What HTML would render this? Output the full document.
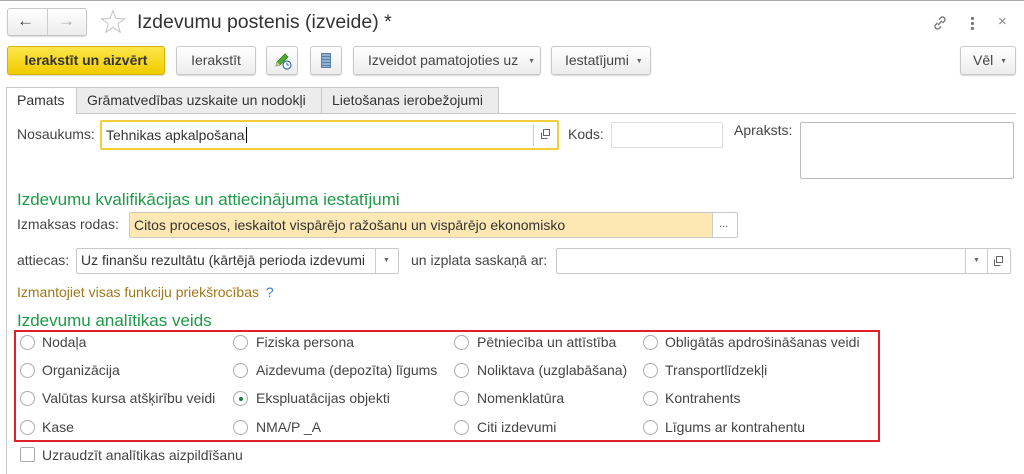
<!DOCTYPE html>
<html><head><meta charset="utf-8"><style>
*{box-sizing:border-box;margin:0;padding:0}
body{width:1024px;height:474px;overflow:hidden;background:#fff;font-family:"Liberation Sans",Arial,sans-serif;font-size:14px;color:#444;position:relative}
.a{position:absolute}
.t{position:absolute;white-space:nowrap;line-height:16px}
.btn{position:absolute;height:29px;border:1px solid #c8c8c8;border-radius:3px;background:linear-gradient(#fff,#ececec);box-shadow:0 1px 1px rgba(0,0,0,.15);line-height:27px;text-align:center;color:#444;font-size:14px;white-space:nowrap}
.inp{position:absolute;border:1px solid #c8c8c8;border-radius:2px;background:#fff}
.radio{position:absolute;width:15px;height:15px;border:1px solid #aaa;border-radius:50%;background:#fff}
.dd{font-size:7px;color:#666;vertical-align:middle}
.green{color:#1d9a46;font-size:17px}
.tab{position:absolute;top:87px;height:27px;border:1px solid #c8c8c8;background:#ececec;line-height:25px;padding:0 10px;color:#333;font-size:14px}
</style></head><body>
<div class="a" style="left:0;top:0;width:1024px;height:1px;background:#aaa"></div>
<div class="btn" style="left:7px;top:8px;width:80px;height:28px"></div>
<div class="a" style="left:47px;top:9px;width:1px;height:26px;background:#ccc"></div>
<div class="t" style="left:17px;top:13px;font-size:17px;color:#444;font-weight:bold">&#8592;</div>
<div class="t" style="left:58px;top:13px;font-size:17px;color:#aaa;font-weight:bold">&#8594;</div>
<svg class="a" style="left:100px;top:9px" width="26" height="25" viewBox="0 0 26 25"><polygon points="13,1.5 16,9.5 24.5,9.7 17.8,15 20.2,23.3 13,18.4 5.8,23.3 8.2,15 1.5,9.7 10,9.5" fill="none" stroke="#c4c4c4" stroke-width="1"/></svg>
<div class="t" style="left:137px;top:11px;font-size:19.5px;line-height:22px;color:#333">Izdevumu postenis (izveide) *</div>
<svg class="a" style="left:931px;top:14px" width="18" height="18" viewBox="0 0 18 18" fill="none" stroke="#777" stroke-width="1.4"><path d="M8 5.5l2-2a2.5 2.5 0 013.5 3.5l-2 2M10 12.5l-2 2a2.5 2.5 0 01-3.5-3.5l2-2M7 11l4-4"/></svg>
<div class="a" style="left:971px;top:17px;width:3px;height:3px;background:#777;border-radius:1px"></div>
<div class="a" style="left:971px;top:22px;width:3px;height:3px;background:#777;border-radius:1px"></div>
<div class="a" style="left:971px;top:27px;width:3px;height:3px;background:#777;border-radius:1px"></div>
<div class="t" style="left:998px;top:14px;font-size:15px;color:#888">&#215;</div>
<div class="btn" style="left:7px;top:46px;width:158px;background:linear-gradient(#fbe64a,#f2cc00);border-color:#d4b200;color:#333;font-weight:bold">Ierakstīt un aizvērt</div>
<div class="btn" style="left:176px;top:46px;width:80px">Ierakstīt</div>
<div class="btn" style="left:266px;top:46px;width:32px"></div>
<svg class="a" style="left:273px;top:51px" width="20" height="20" viewBox="0 0 20 20"><path d="M3 15l1-4 8-8 3 3-8 8z" fill="#4cae2e" stroke="#2d7a1a" stroke-width=".8"/><path d="M3 15l1-4 3 3z" fill="#e8c890"/><circle cx="14" cy="14" r="4" fill="#fff" stroke="#3a6fa8" stroke-width="1.2"/><path d="M14 11.5V14h2" stroke="#3a6fa8" fill="none"/></svg>
<div class="btn" style="left:310px;top:46px;width:32px"></div>
<div class="a" style="left:321px;top:53px;width:10px;height:15px;border:1px solid #5a7fa8;background:repeating-linear-gradient(#8fb0d4 0 2px,#5a7fa8 2px 3px)"></div>
<div class="btn" style="left:353px;top:46px;width:188px;text-align:left;padding-left:14px">Izveidot pamatojoties uz <span class="dd" style="margin-left:6px">&#9660;</span></div>
<div class="btn" style="left:551px;top:46px;width:100px;text-align:left;padding-left:13px">Iestatījumi <span class="dd" style="margin-left:3px">&#9660;</span></div>
<div class="btn" style="left:960px;top:46px;width:56px;text-align:left;padding-left:12px">Vēl <span class="dd" style="margin-left:3px">&#9660;</span></div>
<div class="a" style="left:76px;top:113px;width:940px;height:1px;background:#c8c8c8"></div>
<div class="a" style="left:6px;top:113px;width:1px;height:361px;background:#c8c8c8"></div>
<div class="tab" style="left:6px;width:71px;background:#fff;border-bottom-color:#fff">Pamats</div>
<div class="tab" style="left:76px;width:246px">Grāmatvedības uzskaite un nodokļi</div>
<div class="tab" style="left:321px;width:178px">Lietošanas ierobežojumi</div>
<div class="t" style="left:17px;top:126px">Nosaukums:</div>
<div class="inp" style="left:100px;top:120px;width:459px;height:30px;border:2px solid #f2cf3a"></div>
<div class="t" style="left:106px;top:127px;color:#333">Tehnikas apkalpošana<span style="border-left:1px solid #000;margin-left:1px"></span></div>
<div class="a" style="left:533px;top:124px;width:1px;height:22px;background:#ccc"></div>
<svg class="a" style="left:539px;top:128px" width="12" height="12" viewBox="0 0 12 12" fill="none" stroke="#666"><rect x="4.5" y="1.5" width="6" height="6"/><path d="M2.5 4.5v6h6"/></svg>
<div class="t" style="left:568px;top:126px">Kods:</div>
<div class="inp" style="left:611px;top:122px;width:112px;height:26px;border-color:#ddd"></div>
<div class="t" style="left:734px;top:122px">Apraksts:</div>
<div class="inp" style="left:800px;top:122px;width:214px;height:57px;border-color:#bbb"></div>
<div class="t green" style="left:17px;top:190px;line-height:20px">Izdevumu kvalifikācijas un attiecinājuma iestatījumi</div>
<div class="t" style="left:17px;top:216px">Izmaksas rodas:</div>
<div class="inp" style="left:129px;top:212px;width:609px;height:26px"></div>
<div class="a" style="left:130px;top:213px;width:583px;height:24px;background:#fde8b4;border-right:1px solid #ccc"></div>
<div class="t" style="left:134px;top:217px;color:#333">Citos procesos, ieskaitot vispārējo ražošanu un vispārējo ekonomisko</div>
<div class="t" style="left:719px;top:216px;font-size:11px;color:#555">...</div>
<div class="t" style="left:17px;top:252px">attiecas:</div>
<div class="inp" style="left:76px;top:248px;width:323px;height:26px"></div>
<div class="a" style="left:77px;top:249px;width:298px;height:24px;overflow:hidden"><div class="t" style="left:4px;top:3px;color:#333">Uz finanšu rezultātu (kārtējā perioda izdevumi</div></div>
<div class="a" style="left:375px;top:249px;width:1px;height:24px;background:#ccc"></div>
<div class="t dd" style="left:383px;top:253px">&#9660;</div>
<div class="t" style="left:411px;top:252px">un izplata saskaņā ar:</div>
<div class="inp" style="left:556px;top:248px;width:455px;height:26px"></div>
<div class="a" style="left:965px;top:249px;width:1px;height:24px;background:#ccc"></div>
<div class="a" style="left:987px;top:249px;width:1px;height:24px;background:#ccc"></div>
<div class="t dd" style="left:973px;top:253px">&#9660;</div>
<svg class="a" style="left:992px;top:255px" width="12" height="12" viewBox="0 0 12 12" fill="none" stroke="#666"><rect x="4.5" y="1.5" width="6" height="6"/><path d="M2.5 4.5v6h6"/></svg>
<div class="t" style="left:17px;top:284px;color:#a07818">Izmantojiet visas funkciju priekšrocības <span style="color:#3b86c8;margin-left:3px">?</span></div>
<div class="t green" style="left:17px;top:311px;line-height:20px">Izdevumu analītikas veids</div>
<div class="a" style="left:14px;top:330px;width:866px;height:112px;border:2px solid #e0202a"></div>
<div class="radio" style="left:20px;top:335px"></div><div class="t" style="left:42px;top:334px">Nodaļa</div>
<div class="radio" style="left:20px;top:363px"></div><div class="t" style="left:42px;top:362px">Organizācija</div>
<div class="radio" style="left:20px;top:391px"></div><div class="t" style="left:42px;top:390px">Valūtas kursa atšķirību veidi</div>
<div class="radio" style="left:20px;top:420px"></div><div class="t" style="left:42px;top:419px">Kase</div>
<div class="radio" style="left:233px;top:335px"></div><div class="t" style="left:256px;top:334px">Fiziska persona</div>
<div class="radio" style="left:233px;top:363px"></div><div class="t" style="left:256px;top:362px">Aizdevuma (depozīta) līgums</div>
<div class="radio" style="left:233px;top:391px"><div class="a" style="left:4.5px;top:4.5px;width:4px;height:4px;border-radius:50%;background:#1d7a3a"></div></div><div class="t" style="left:256px;top:390px">Ekspluatācijas objekti</div>
<div class="radio" style="left:233px;top:420px"></div><div class="t" style="left:256px;top:419px">NMA/P _A</div>
<div class="radio" style="left:454px;top:335px"></div><div class="t" style="left:477px;top:334px">Pētniecība un attīstība</div>
<div class="radio" style="left:454px;top:363px"></div><div class="t" style="left:477px;top:362px">Noliktava (uzglabāšana)</div>
<div class="radio" style="left:454px;top:391px"></div><div class="t" style="left:477px;top:390px">Nomenklatūra</div>
<div class="radio" style="left:454px;top:420px"></div><div class="t" style="left:477px;top:419px">Citi izdevumi</div>
<div class="radio" style="left:643px;top:335px"></div><div class="t" style="left:665px;top:334px">Obligātās apdrošināšanas veidi</div>
<div class="radio" style="left:643px;top:363px"></div><div class="t" style="left:665px;top:362px">Transportlīdzekļi</div>
<div class="radio" style="left:643px;top:391px"></div><div class="t" style="left:665px;top:390px">Kontrahents</div>
<div class="radio" style="left:643px;top:420px"></div><div class="t" style="left:665px;top:419px">Līgums ar kontrahentu</div>
<div class="a" style="left:20px;top:447px;width:15px;height:15px;border:1px solid #aaa;border-radius:2px"></div>
<div class="t" style="left:42px;top:447px">Uzraudzīt analītikas aizpildīšanu</div>
</body></html>
